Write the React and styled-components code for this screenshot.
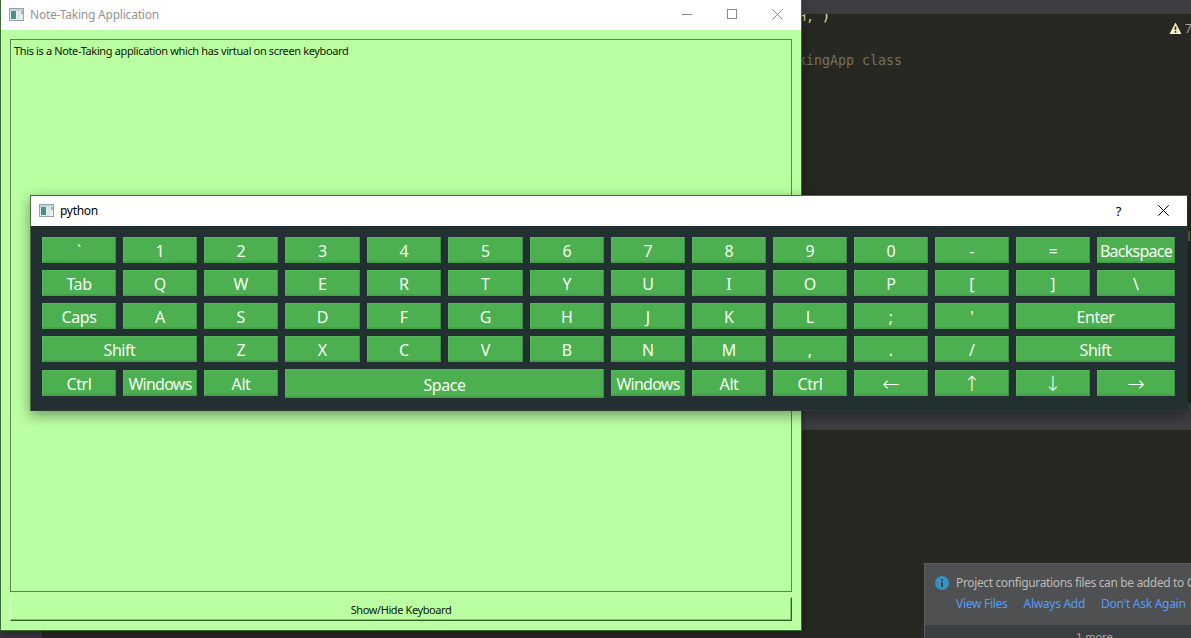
import React from 'react';
import styled, { createGlobalStyle } from 'styled-components';

const GlobalStyle = createGlobalStyle`
  * { box-sizing: border-box; }
  body { margin: 0; overflow: hidden; background: #272822; }
`;

const ui = '"Noto Sans", "Open Sans", sans-serif';

const Desktop = styled.main`
  position: relative;
  width: 1191px;
  height: 638px;
  overflow: hidden;
  background: #272822;
  font-family: ${ui};
`;

const Editor = styled.section`
  height: 638px;
  display: flex;
  flex-direction: column;
`;

const ToolStrip = styled.div`
  flex: none;
  height: ${(p) => p.$height}px;
  background: #3c3f41;
`;

const CodePane = styled.div`
  position: relative;
  flex: none;
  height: ${(p) => p.$height}px;
  padding-left: 798px;
  overflow: hidden;
  background: #272822;
`;

const CodeLine = styled.pre`
  margin: ${(p) => p.$top}px 0 0;
  font: 13.3px/18px "DejaVu Sans Mono", monospace;
  color: ${(p) => p.$color};
`;

const Comma = styled.span`
  color: #d8cf80;
`;

const Warnings = styled.div`
  position: absolute;
  top: 8px;
  left: 1169px;
  display: flex;
  gap: 3px;
  font-size: 12px;
  line-height: 14px;
  color: #a3a59c;
`;

const ScrollMark = styled.div`
  position: absolute;
  top: 217px;
  left: 1188px;
  width: 2px;
  height: 10px;
  background: #6b5f49;
`;

const StatusBar = styled.div`
  margin-top: auto;
  height: 7px;
  width: 42px;
  background: #35373a;
`;

const Window = styled.section`
  position: absolute;
  left: ${(p) => p.$left}px;
  top: ${(p) => p.$top}px;
  width: ${(p) => p.$width}px;
  height: ${(p) => p.$height}px;
  display: flex;
  flex-direction: column;
`;

const NoteWindow = styled(Window)`
  background: #bbffa3;
  box-shadow: 0 0 0 1px #3f6b38, 1px 3px 9px rgba(0, 0, 0, 0.35);
`;

const KeyboardWindow = styled(Window)`
  background: #223031;
  border: 1px solid #4b6a43;
  border-right-color: #223031;
  border-bottom-color: #2d3c38;
  box-shadow: 0 4px 13px rgba(0, 0, 0, 0.42);
`;

const TitleBar = styled.header`
  flex: none;
  height: 30px;
  display: flex;
  align-items: center;
  padding: 0 1px 1px 8px;
  background: #fff;
  color: ${(p) => p.$color};
  font-size: 12px;
  line-height: 16px;
`;

const Title = styled.span`
  margin-left: 5px;
  padding-top: 1px;
  flex: 1;
  letter-spacing: ${(p) => p.$spacing}px;
`;

const Control = styled.div`
  width: 45px;
  height: 28px;
  display: flex;
  align-items: center;
  justify-content: center;
  color: ${(p) => p.$color};
  font-size: 13px;
  svg { display: block; }
`;

const NoteBody = styled.div`
  flex: 1;
  display: flex;
  flex-direction: column;
  padding: 9px 9px 9px;
`;

const NoteText = styled.div`
  height: 553px;
  padding: 3px;
  border: 1px solid #5d8650;
  font-size: 11px;
  line-height: 16px;
  letter-spacing: -0.365px;
  color: #0b1a06;
`;

const ToggleButton = styled.button`
  margin-top: 5px;
  height: 24px;
  padding: 2px 0 0;
  background: #bbffa3;
  border: 1px solid #cfffc0;
  border-right-color: #2f6125;
  border-bottom-color: #2f6125;
  box-shadow: inset -1px -1px 0 #83bd72;
  color: #0b1a06;
  font-family: ${ui};
  font-size: 11px;
  line-height: 16px;
  letter-spacing: -0.4px;
`;

const Keys = styled.div`
  padding: 11px 0 0 11px;
  display: grid;
  grid-template-columns: repeat(3, 74px) 75px 74px 75px repeat(7, 74px) 78px;
  grid-template-rows: repeat(4, 26px) 29px;
  gap: 7px;
`;

const keySpacing = (label) => {
  if (label.length > 5) return -0.75;
  return label.length > 1 ? -0.45 : 0;
};

const Key = styled.button`
  grid-column: span ${(p) => p.$span};
  height: ${(p) => (p.$tall ? 29 : 26)}px;
  margin: ${(p) => (p.$low ? 1 : 0)}px 0 0;
  padding: 3px 0 0;
  overflow: hidden;
  white-space: nowrap;
  border: 1px solid #57b75b;
  border-right-color: #3f8f42;
  border-bottom: 2px solid #45a049;
  background: #4caf50;
  color: #f4fff4;
  font-family: ${(p) => (p.$arrow ? '"DejaVu Sans Light", "DejaVu Sans", sans-serif' : ui)};
  font-weight: ${(p) => (p.$arrow ? 200 : 400)};
  font-size: ${(p) => (p.$arrow ? 21 : 16)}px;
  line-height: 20px;
  letter-spacing: ${(p) => p.$spacing}px;
`;

const Notification = styled.aside`
  position: absolute;
  left: 924px;
  top: 563px;
  width: 300px;
  height: 90px;
  background: #4e5052;
  border: 1px solid #595b5d;
  font-size: 12px;
  line-height: 16px;
  white-space: nowrap;
  color: #bbbbbb;
`;

const Message = styled.div`
  display: flex;
  align-items: center;
  gap: 7px;
  padding: 11px 0 0 10px;
  letter-spacing: -0.36px;
`;

const Links = styled.nav`
  display: flex;
  gap: 16px;
  padding: 5px 0 0 31px;
  color: #589df6;
  letter-spacing: -0.28px;
`;

const More = styled.div`
  margin-top: 13px;
  height: 30px;
  padding: 4px 0 0 151px;
  background: #3c3f41;
  font-size: 11px;
  color: #a4a6a8;
`;

const AppIcon = () => (
  <svg width="16" height="14" viewBox="0 0 16 14">
    <rect x="0.5" y="0.5" width="14" height="12" fill="#e9eef0" stroke="#98a3a8" />
    <rect x="1" y="1" width="13" height="2" fill="#c6d3d9" />
    <rect x="2" y="3" width="5" height="8" fill="#4b8f89" />
    <rect x="8" y="3" width="3" height="8" fill="#dfe5ea" />
    <rect x="12" y="3" width="2" height="3" fill="#a0b5b5" />
  </svg>
);

const Minimize = () => (
  <svg width="11" height="11"><path d="M0 5.5H10" stroke="currentColor" /></svg>
);
const Maximize = () => (
  <svg width="11" height="11"><rect x="0.5" y="0.5" width="9" height="9" fill="none" stroke="currentColor" /></svg>
);
const Close = () => (
  <svg width="11" height="11"><path d="M0.3 0.3L10.7 10.7M10.7 0.3L0.3 10.7" stroke="currentColor" /></svg>
);
const WarningIcon = () => (
  <svg width="13" height="13" viewBox="0 0 13 13">
    <path d="M6.5 0.5L12.5 12H.5Z" fill="#f4f0c4" />
    <path d="M6.5 4.5V8M6.5 9V10.7" stroke="#272822" strokeWidth="1.6" />
  </svg>
);
const InfoIcon = () => (
  <svg width="14" height="14" viewBox="0 0 14 14">
    <circle cx="7" cy="7" r="7" fill="#3592c4" />
    <path d="M7 3V5M7 6V11" stroke="#3d4a52" strokeWidth="2" />
  </svg>
);

const rows = [
  ['`', '1', '2', '3', '4', '5', '6', '7', '8', '9', '0', '-', '=', 'Backspace'],
  ['Tab', 'Q', 'W', 'E', 'R', 'T', 'Y', 'U', 'I', 'O', 'P', '[', ']', '\\'],
  ['Caps', 'A', 'S', 'D', 'F', 'G', 'H', 'J', 'K', 'L', ';', "'", ['Enter', 2]],
  [['Shift', 2], 'Z', 'X', 'C', 'V', 'B', 'N', 'M', ',', '.', '/', ['Shift', 2]],
  ['Ctrl', 'Windows', 'Alt', ['Space', 4], 'Windows', 'Alt', 'Ctrl', '←', '↑', '↓', '→'],
];

export default function App() {
  return (
    <Desktop>
      <GlobalStyle />
      <Editor>
        <ToolStrip $height={14} />
        <CodePane $height={389}>
          <CodeLine $top={-6} $color="#e6e6dc"><Comma>H,</Comma> )</CodeLine>
          <CodeLine $top={26} $color="#75715e">kingApp class</CodeLine>
          <Warnings><WarningIcon />7</Warnings>
          <ScrollMark />
        </CodePane>
        <ToolStrip $height={27} />
        <StatusBar />
      </Editor>

      <Notification>
        <Message><InfoIcon />Project configurations files can be added to Git</Message>
        <Links><span>View Files</span><span>Always Add</span><span>Don't Ask Again</span></Links>
        <More>1 more</More>
      </Notification>

      <NoteWindow $left={1} $top={0} $width={800} $height={630}>
        <TitleBar $color="#959595">
          <AppIcon />
          <Title $spacing={-0.22}>Note-Taking Application</Title>
          <Control $color="#8a8a8a"><Minimize /></Control>
          <Control $color="#8a8a8a"><Maximize /></Control>
          <Control $color="#8a8a8a"><Close /></Control>
        </TitleBar>
        <NoteBody>
          <NoteText>This is a Note-Taking application which has virtual on screen keyboard</NoteText>
          <ToggleButton>Show/Hide Keyboard</ToggleButton>
        </NoteBody>
      </NoteWindow>

      <KeyboardWindow $left={30} $top={195} $width={1158} $height={216}>
        <TitleBar $color="#000">
          <AppIcon />
          <Title $spacing={-0.3}>python</Title>
          <Control $color="#000">?</Control>
          <Control $color="#000"><Close /></Control>
        </TitleBar>
        <Keys>
          {rows.map((row, r) => row.map((item, i) => {
            const [label, span] = Array.isArray(item) ? item : [item, 1];
            const tall = label === 'Space';
            return (
              <Key
                key={`${r}-${i}`}
                $span={span}
                $tall={tall}
                $low={r === 4 && !tall}
                $arrow={'←↑↓→'.includes(label)}
                $spacing={keySpacing(label)}
              >
                {label}
              </Key>
            );
          }))}
        </Keys>
      </KeyboardWindow>
    </Desktop>
  );
}
